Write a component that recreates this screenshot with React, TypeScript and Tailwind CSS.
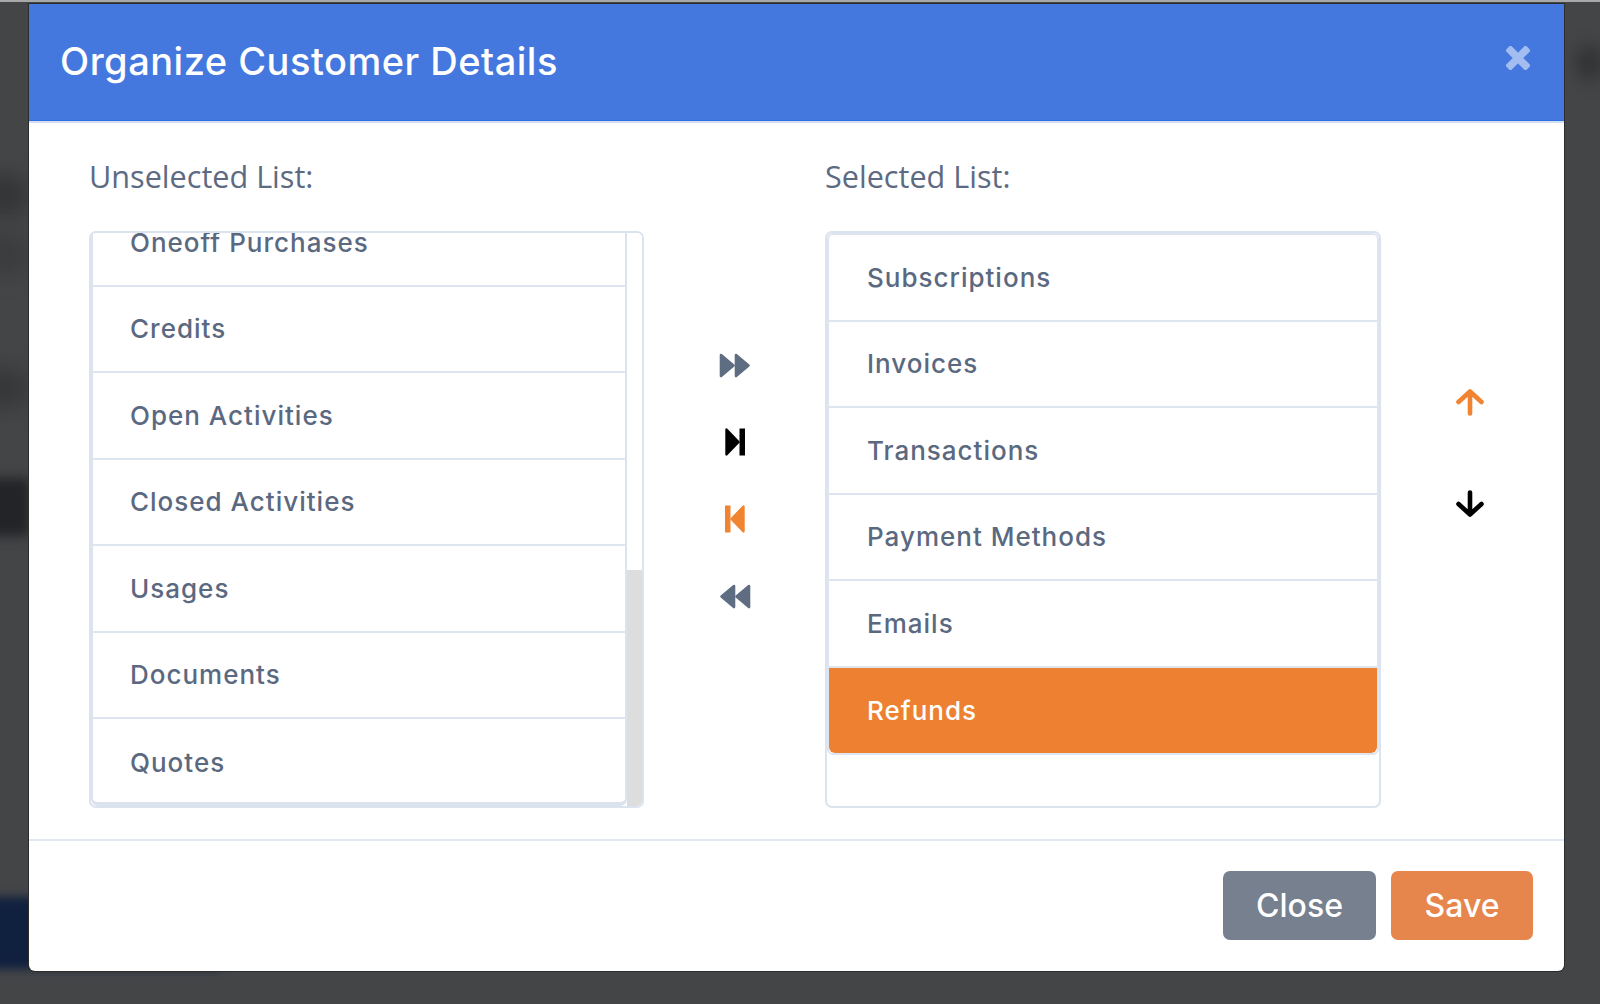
function FastForward({ flip = false }: { flip?: boolean }) {
  return (
    <svg width="32" height="25" viewBox="0 0 32 25" className={flip ? "block -scale-x-100" : "block"}>
      <path d="M2 2 L14.5 12.5 L2 23 Z" fill="#5f6d83" stroke="#5f6d83" strokeWidth="2.6" strokeLinejoin="round" />
      <path d="M17 2 L29.5 12.5 L17 23 Z" fill="#5f6d83" stroke="#5f6d83" strokeWidth="2.6" strokeLinejoin="round" />
    </svg>
  );
}

function Step({ color, flip = false }: { color: string; flip?: boolean }) {
  return (
    <svg width="20" height="28" viewBox="0 0 20 28" className={flip ? "block -scale-x-100" : "block"}>
      <path d="M1.5 1.5 L13.5 14 L1.5 26.5 Z" fill={color} stroke={color} strokeWidth="2.4" strokeLinejoin="round" />
      <rect x="14.5" y="0.5" width="5.5" height="27" fill={color} />
    </svg>
  );
}

function Arrow({ color, down = false }: { color: string; down?: boolean }) {
  return (
    <svg width="28" height="28" viewBox="0 0 28 28" className={down ? "block rotate-180" : "block"}>
      <path d="M14 25.5 V4 M2.5 14 L14 3.5 L25.5 14" fill="none" stroke={color} strokeWidth="4.6" strokeLinecap="round" strokeLinejoin="round" />
    </svg>
  );
}

function Row({ label, selected = false, inset = false }: { label: string; selected?: boolean; inset?: boolean }) {
  return (
    <div
      className={
        "flex shrink-0 items-center font-[Inter,sans-serif] text-[26px] font-medium tracking-[1px] " +
        (inset ? "pl-[38px] " : "pl-[37px] ") +
        (selected ? "h-[85px] rounded-b-[6px] bg-[#ee8131] text-white" : "h-[86.5px] text-[#5b6980]")
      }
    >
      {label}
    </div>
  );
}

function Band({ className }: { className: string }) {
  return <div className={"absolute left-[-30px] h-[40px] w-[60px] " + className} />;
}

export default function App() {
  const left = ["Oneoff Purchases", "Credits", "Open Activities", "Closed Activities", "Usages", "Documents", "Quotes"];
  const right = ["Subscriptions", "Invoices", "Transactions", "Payment Methods", "Emails"];
  return (
    <div className="relative h-[1004px] w-[1600px] overflow-hidden bg-[#444547]">
      <Band className="top-[175px] rounded-full bg-[#343537] blur-[10px]" />
      <Band className="top-[235px] rounded-full bg-[#3b3c3e] blur-[10px]" />
      <Band className="top-[368px] rounded-full bg-[#37383a] blur-[10px]" />
      <Band className="top-[478px] h-[58px] bg-[#232427] blur-[6px]" />
      <div className="absolute left-[-30px] top-[897px] h-[72px] w-[250px] bg-[#10203f] blur-[5px]" />
      <div className="absolute left-[1575px] top-[45px] h-[36px] w-[30px] rounded-full bg-[#333436] blur-[8px]" />
      <div className="absolute left-0 top-0 h-[2px] w-full bg-[#a9a9a9]" />

      <div className="relative flex flex-col pl-[29px] pt-[4px]">
        <div className="flex h-[967px] w-[1535px] flex-col overflow-hidden rounded-b-[6px] bg-white shadow-[0_0_0_1px_#2c2c2c]">
          <div className="flex h-[119px] shrink-0 items-start justify-between border-b-[2px] border-[#d3deef] bg-[#4478df] pl-[31px] pr-[34px] shadow-[inset_0_-1px_0_#2f6fe6]">
            <h1 className="mt-[33px] font-[Inter,sans-serif] text-[38px] font-medium leading-[48px] tracking-[0.5px] text-white">
              Organize Customer Details
            </h1>
            <svg width="24" height="24" viewBox="0 0 24 24" className="mt-[42px] block">
              <path d="M4.5 4.5 L19.5 19.5 M19.5 4.5 L4.5 19.5" stroke="#a3bdf0" strokeWidth="7.6" strokeLinecap="square" />
            </svg>
          </div>

          <div className="flex h-[718px] shrink-0 border-b-[2px] border-[#e2e9f3] pl-[60px] pt-[32px]">
            <div className="flex w-[555px] shrink-0 flex-col">
              <div className="h-[44px] font-['Open_Sans',sans-serif] text-[30.6px] leading-[43px] text-[#5d6b82]">Unselected List:</div>
              <div className="mt-[32px] flex h-[577px] overflow-hidden rounded-[7px] border-[2px] border-[#dbe3ef]">
                <div className="flex w-[536px] shrink-0 flex-col overflow-hidden rounded-b-[7px] border-x-[2px] border-b-[4px] border-[#dbe3ef]">
                  <div className="-mt-[33px] flex flex-col divide-y-[2px] divide-[#dde5f0]">
                    {left.map((l) => (
                      <Row key={l} label={l} />
                    ))}
                  </div>
                </div>
                <div className="flex flex-1 flex-col justify-end bg-white">
                  <div className="h-[236px] bg-[#dddddd]" />
                </div>
              </div>
            </div>

            <div className="flex w-[181px] shrink-0 flex-col items-center pt-[198px]">
              <div className="flex h-[24px] items-center justify-center"><FastForward /></div>
              <div className="mt-[53px] flex h-[24px] items-center justify-center"><Step color="#000000" /></div>
              <div className="mt-[53px] flex h-[24px] items-center justify-center"><Step color="#f08430" flip /></div>
              <div className="mt-[53px] flex h-[24px] items-center justify-center"><FastForward flip /></div>
            </div>

            <div className="flex w-[556px] shrink-0 flex-col">
              <div className="h-[44px] font-['Open_Sans',sans-serif] text-[30.6px] leading-[43px] text-[#5d6b82]">Selected List:</div>
              <div className="mt-[32px] h-[577px] rounded-[7px] border-[2px] border-[#dbe3ef]">
                <div className="flex flex-col divide-y-[2px] divide-[#dde5f0] overflow-hidden rounded-[6px] border-x-[2px] border-b-[2px] border-t-[2px] border-[#dde5f0]">
                  {right.map((l) => (
                    <Row key={l} label={l} inset />
                  ))}
                  <Row label="Refunds" selected inset />
                </div>
              </div>
            </div>

            <div className="flex w-[178px] shrink-0 flex-col items-center pt-[233px]">
              <Arrow color="#f08430" />
              <div className="mt-[74px]"><Arrow color="#000000" down /></div>
            </div>
          </div>

          <div className="flex flex-1 items-start justify-end gap-[15px] pr-[31px] pt-[30px]">
            <button className="flex h-[69px] w-[153px] items-center justify-center rounded-[7px] bg-[#76808f] font-[Inter,sans-serif] text-[32px] font-medium text-white">
              Close
            </button>
            <button className="flex h-[69px] w-[142px] items-center justify-center rounded-[7px] bg-[#e6854c] font-[Inter,sans-serif] text-[32px] font-medium text-white">
              Save
            </button>
          </div>
        </div>
      </div>
    </div>
  );
}
